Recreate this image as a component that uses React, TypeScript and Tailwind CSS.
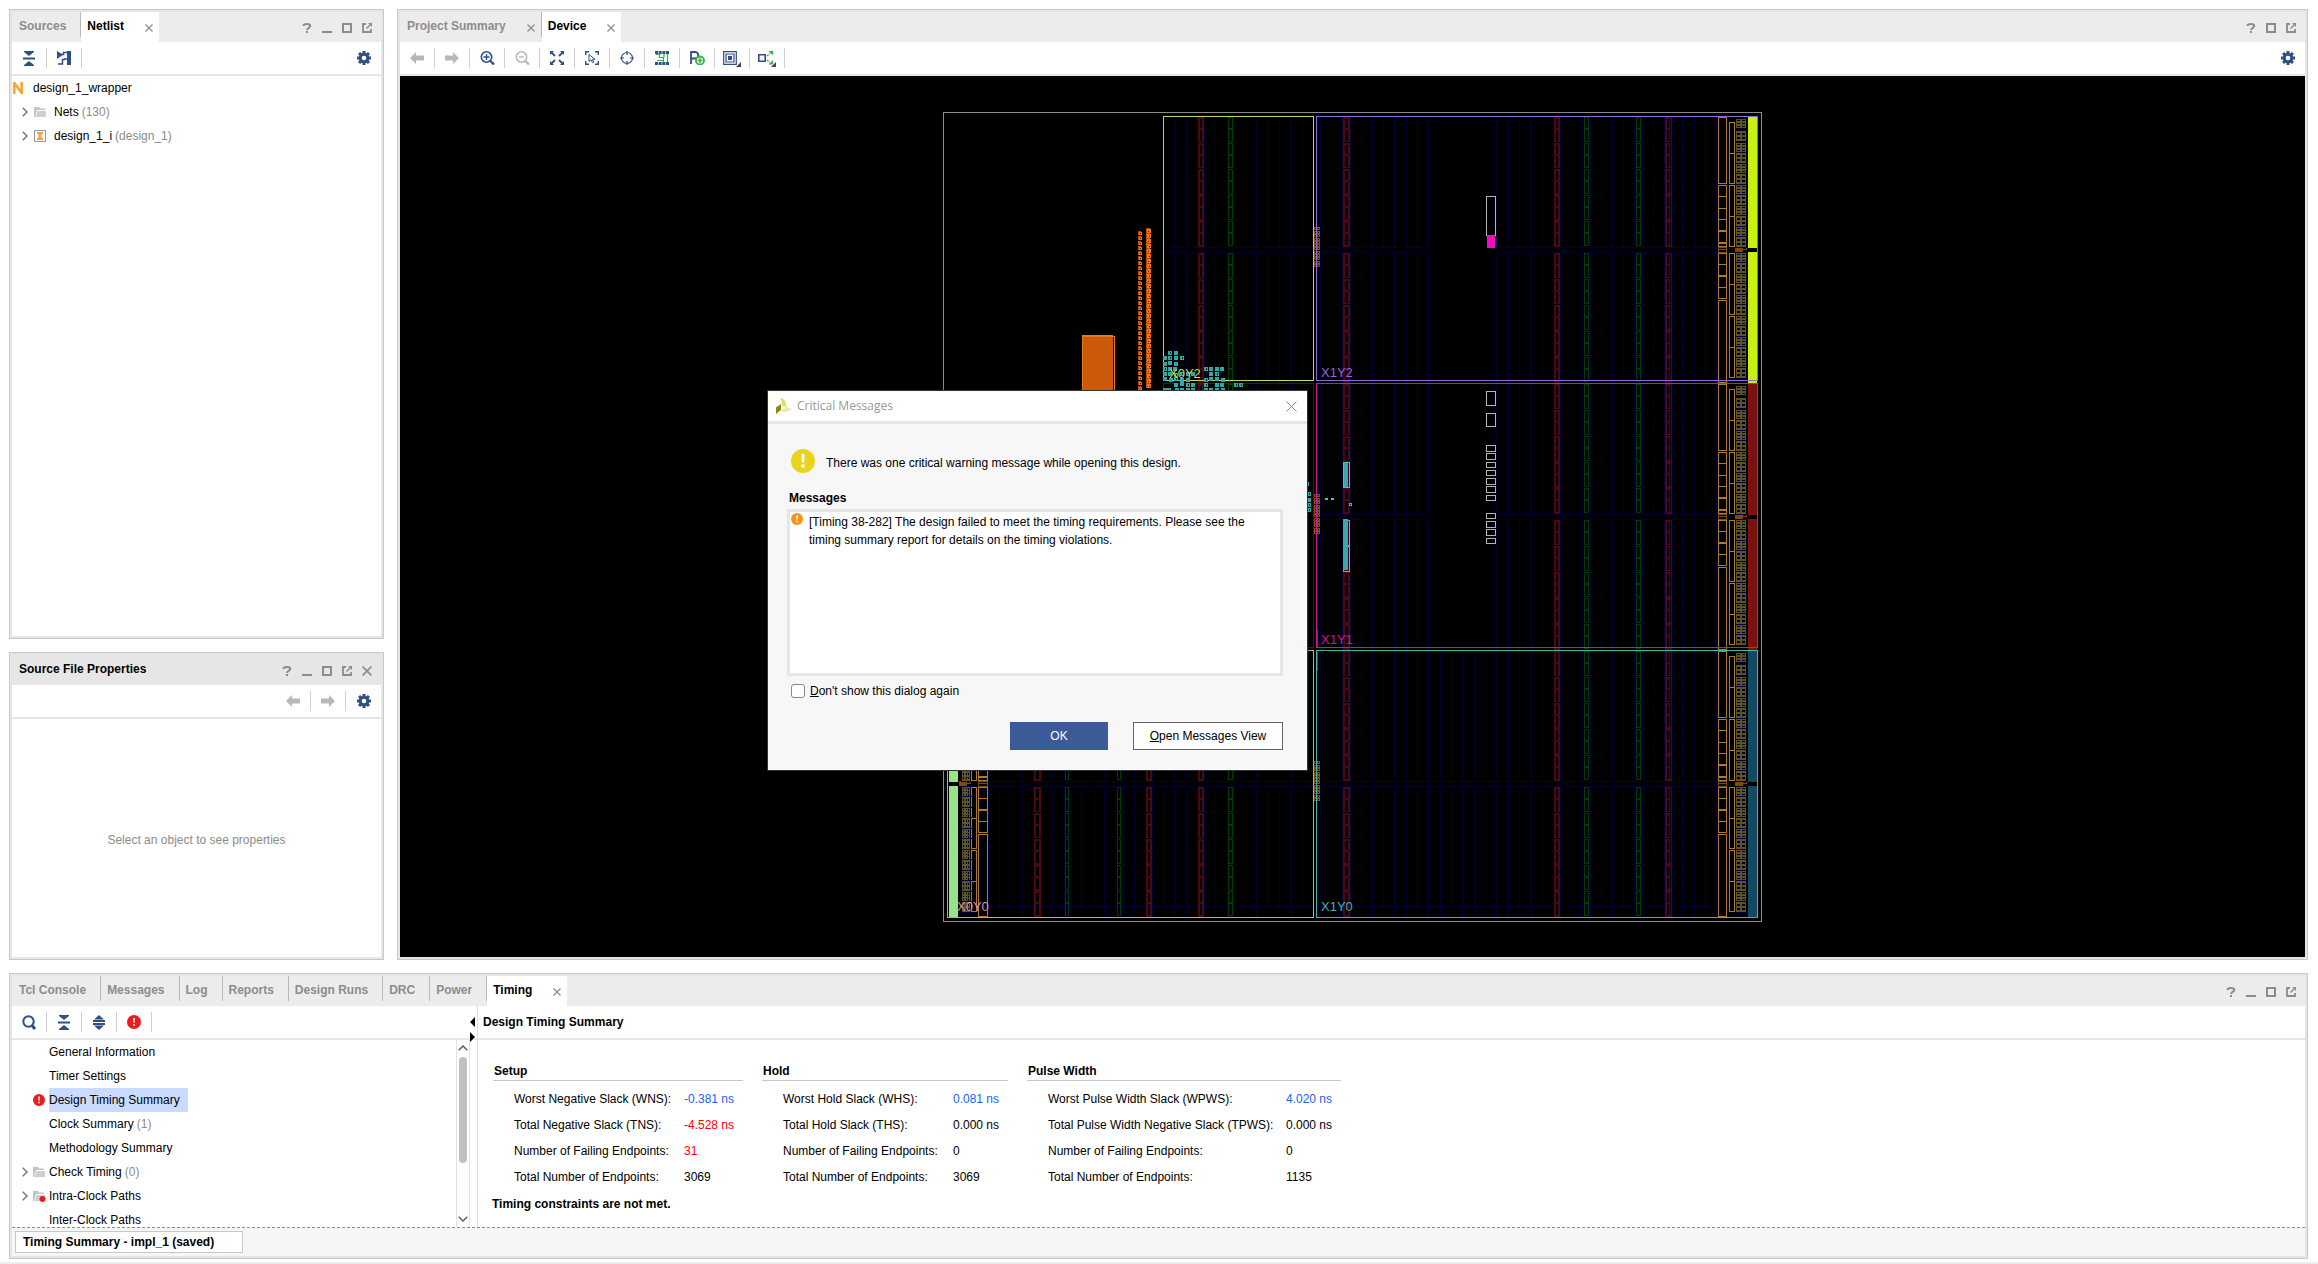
import React from 'react';
import clsx from 'clsx';

const NAVY = '#2f4f87';

/* ---------- small icons ---------- */

function Gear() {
  return (
    <svg width="14" height="14" viewBox="-7 -7 14 14">
      <circle r="3.8" fill="none" stroke={NAVY} strokeWidth="3" />
      {[0, 45, 90, 135, 180, 225, 270, 315].map((a) => (
        <rect key={a} x="-1.5" y="-7" width="3" height="3" fill={NAVY} transform={`rotate(${a})`} />
      ))}
    </svg>
  );
}

function Arrow({ right }: { right?: boolean }) {
  return (
    <svg width="14" height="12" viewBox="0 0 14 12">
      <path d={right ? 'M14 6 8 0v3.5H0v5h8V12z' : 'M0 6 6 0v3.5h8v5H6V12z'} fill="#b8b8b8" />
    </svg>
  );
}

function CollapseAll() {
  return (
    <svg width="12" height="15" viewBox="0 0 12 15" fill={NAVY}>
      <path d="M1 0h10v1L6 5 1 1zM0 6.5h12v2H0zM1 15h10v-1l-5-4-5 4z" />
    </svg>
  );
}

function ExpandAll() {
  return (
    <svg width="12" height="15" viewBox="0 0 12 15" fill={NAVY}>
      <path d="M1 4.5h10L6 0zM0 5h12v2H0zM0 8h12v2H0zM1 10.5h10L6 15z" />
    </svg>
  );
}

function SchematicIcon() {
  return (
    <svg width="14" height="14" viewBox="0 0 14 14">
      <path d="M0 0l6 3.800L0 8zM10 0h4v14h-4z" fill={NAVY} />
      <path d="M4 3.500h2.500V1.500H11M7 8h4M1 13h4.500V8.500H8" fill="none" stroke={NAVY} strokeWidth="1.500" />
    </svg>
  );
}

function SearchIcon() {
  return (
    <svg width="14" height="15" viewBox="0 0 14 15" fill="none" stroke={NAVY}>
      <circle cx="6.5" cy="6.5" r="5.2" strokeWidth="2" />
      <path d="M10 10.5 13 14" strokeWidth="3" />
    </svg>
  );
}

function ZoomIcon({ color, plus }: { color: string; plus?: boolean }) {
  return (
    <svg width="15" height="14" viewBox="0 0 15 14" fill="none" stroke={color}>
      <circle cx="6.5" cy="6" r="5.2" strokeWidth="1.6" />
      <path d={plus ? 'M3.5 6h6M6.5 3v6' : 'M4 6h5'} strokeWidth="1.4" />
      <path d="M10.5 10 14 13.5" strokeWidth="2.4" />
    </svg>
  );
}

function FitIcon() {
  return (
    <svg width="14" height="14" viewBox="0 0 14 14" fill={NAVY} stroke={NAVY}>
      <path d="M0 0h4L0 4zM14 0h-4l4 4zM0 14h4l-4-4zM14 14h-4l4-4z" stroke="none" />
      <path d="M1 1l4 4M13 1 9 5M1 13l4-4M13 13 9 9" strokeWidth="1.8" />
    </svg>
  );
}

function SelectAreaIcon() {
  return (
    <svg width="14" height="14" viewBox="0 0 14 14" fill="none" stroke={NAVY}>
      <path d="M.7 4V.7H4M10 .7h3.3V4M.7 10v3.3H4M10 13.3h3.3V10" strokeWidth="1.4" />
      <path d="M4 3.5v7l2-1.8 1.5 3 1.2-.6L7.3 8.3H10z" strokeWidth="1" />
    </svg>
  );
}

function TargetIcon() {
  return (
    <svg width="14" height="14" viewBox="0 0 14 14" fill="none" stroke={NAVY}>
      <circle cx="7" cy="7" r="5.5" strokeWidth="1.2" />
      <path d="M7 0v4M7 10v4M0 7h4M10 7h4" strokeWidth="1.2" />
    </svg>
  );
}

function RoutingIcon() {
  return (
    <svg width="14" height="14" viewBox="0 0 14 14">
      {[0, 3.7, 7.4, 11].map((x) => (
        <g key={x} fill={NAVY}>
          <rect x={x} y="0" width="3" height="3" />
          <rect x={x} y="11" width="3" height="3" />
        </g>
      ))}
      <path d="M1 3.5h3.5v3h4V11M12.5 3v8M2 9.5h6M9 3v3" fill="none" stroke="#3cab4a" strokeWidth="1.2" />
    </svg>
  );
}

function PinIcon() {
  return (
    <svg width="16" height="14" viewBox="0 0 16 14" fill="none">
      <path d="M2 13V1h4a3 3 0 0 1 0 6.5H2" stroke={NAVY} strokeWidth="1.8" />
      <circle cx="11" cy="9.5" r="4" fill="#fff" stroke="#3cb043" strokeWidth="1.8" />
      <path d="M8.5 9.5h5M11 7v5" stroke="#3cb043" strokeWidth="1.6" />
    </svg>
  );
}

function LayersIcon() {
  return (
    <svg width="18" height="18" viewBox="0 0 18 18">
      <path d="M.7 2.700h12.600v12.600H.7zM3 5h8v8H3z" fill="none" stroke={NAVY} strokeWidth="1.2" />
      <rect x="5" y="7" width="4" height="4" fill={NAVY} />
      <path d="M18 13v5h-5z" fill="#444" />
    </svg>
  );
}

function FanoutIcon() {
  return (
    <svg width="18" height="18" viewBox="0 0 18 18">
      <path d="M.8 5.800h6.400v6.400H.8z" fill="none" stroke={NAVY} strokeWidth="1.6" />
      <path d="M9 7l3-2.500M9 11l3 2.500" stroke="#3cb043" strokeWidth="1.4" strokeDasharray="2 1" />
      <path d="M10.500 2H15v4.500zM10.500 15.500H15V11z" fill="#3cb043" />
      <path d="M18 13v5h-5z" fill="#444" />
    </svg>
  );
}

function Alert({ color, size }: { color: string; size: number }) {
  return (
    <svg width={size} height={size} viewBox="0 0 24 24" className="shrink-0">
      <circle cx="12" cy="12" r="12" fill={color} />
      <path d="M10.400 5h3.200l-.4 8.500h-2.400zM10.500 15.500h3v3h-3z" fill="#fff" />
    </svg>
  );
}

function Folder({ dot }: { dot?: boolean }) {
  return (
    <svg width="13" height="12" viewBox="0 0 13 12" className="shrink-0">
      <path d="M0 1h5l1 1.500h5V4H3L1.500 9V11H0z" fill="#c4c4c4" />
      <path d="M3.500 5H12v6H1.500z" fill="#cfcfcf" />
      {dot && <circle cx="9.500" cy="9" r="3" fill="#e81c1c" />}
    </svg>
  );
}

function Chevron() {
  return (
    <svg width="6" height="10" viewBox="0 0 6 10" className="shrink-0">
      <path d="M.7.7 5 5 .7 9.300" fill="none" stroke="#777" strokeWidth="1.4" />
    </svg>
  );
}

function CloseX({ size = 8 }: { size?: number }) {
  return (
    <svg width={size} height={size} viewBox="0 0 8 8">
      <path d="M.5.5l7 7M7.500.5l-7 7" stroke="#8c8c8c" strokeWidth="1.3" />
    </svg>
  );
}

/* ---------- panel chrome ---------- */

function WindowButtons({ closable, noMinimize }: { closable?: boolean; noMinimize?: boolean }) {
  return (
    <div className="ml-auto mt-px flex items-center gap-[10px] pr-[9px]">
      <button aria-label="Help" className="h-[10px] w-[10px]">
        <svg width="10" height="10" viewBox="0 0 10 10" fill="none" stroke="#8c8c8c" strokeWidth="2">
          <path d="M1.500 3C1.500.5 8.500.3 8.300 3 8.200 5 5 4.600 5 7M5 8v2" />
        </svg>
      </button>
      {!noMinimize && <button aria-label="Minimize" className="h-[10px] w-[10px] border-b-2 border-[#8c8c8c]" />}
      <button aria-label="Maximize" className="h-[10px] w-[10px] border-2 border-[#8c8c8c]" />
      <button aria-label="Float" className="h-[10px] w-[10px]">
        <svg width="10" height="10" viewBox="0 0 10 10" fill="none" stroke="#8c8c8c">
          <path d="M4 1H1v8h8V6" strokeWidth="1.800" />
          <path d="M4.500 5.500 8 2" strokeWidth="1.400" />
          <path d="M6 0h4v4z" fill="#8c8c8c" stroke="none" />
        </svg>
      </button>
      {closable && (
        <button aria-label="Close" className="h-[10px] w-[10px]">
          <CloseX size={10} />
        </button>
      )}
    </div>
  );
}

function Panel({ className, children }: { className?: string; children: React.ReactNode }) {
  return (
    <section className={clsx('flex min-w-0 flex-col border border-[#c8c8c8] bg-[#e6e6e6] p-[2px]', className)}>
      {children}
    </section>
  );
}

const CLOSABLE = ['Netlist', 'Project Summary', 'Device', 'Timing'];

function TabBar({ tabs, active, noMinimize }: { tabs: string[]; active: string; noMinimize?: boolean }) {
  return (
    <div className="flex h-[30px] shrink-0 bg-[#ececec]">
      {tabs.map((t, i) => {
        const on = t === active;
        return (
          <div
            key={t}
            className={clsx(
              'flex',
              i === 0 ? 'pl-[7px]' : 'pl-[6px]',
              on ? 'h-[30px] bg-white' : 'h-[25px] border-r border-[#b8b8b8] text-[#8c8c8c]',
              CLOSABLE.includes(t) ? 'pr-[6px]' : 'pr-[14px]',
            )}
          >
            <button className="h-[27px] font-bold">{t}</button>
            {CLOSABLE.includes(t) && (
              <button aria-label={`Close ${t}`} className="ml-[21px] mt-px flex h-[30px] items-center">
                <CloseX />
              </button>
            )}
          </div>
        );
      })}
      <WindowButtons noMinimize={noMinimize} />
    </div>
  );
}

function Tool({ label, last, children }: { label: string; last?: boolean; children: React.ReactNode }) {
  return (
    <button
      aria-label={label}
      className={clsx('flex h-5 w-[35px] items-center justify-center', !last && 'border-r border-[#cfcfcf]')}
    >
      {children}
    </button>
  );
}

function Toolbar({ children }: { children: React.ReactNode }) {
  return <div className="mb-[2px] flex h-8 shrink-0 items-center bg-white">{children}</div>;
}

/* ---------- device floorplan ---------- */

const ROW = 267;
const COLS_LEFT = [1163, 1174, 1186, 1197, 1204, 1215, 1227, 1233, 1245, 1256, 1267, 1279, 1290, 1301];
const COLS_RIGHT = [
  1320, 1331, 1342, 1350, 1361, 1372, 1383, 1394, 1406, 1417, 1428, 1496, 1508, 1519, 1530, 1541, 1553, 1560, 1571,
  1582, 1590, 1601, 1612, 1623, 1634, 1642, 1653, 1664, 1672, 1682, 1694, 1705, 1716,
];
const COLS_MID = [1440, 1451, 1462, 1474, 1485];
const COLS_FAR = [988, 999, 1011, 1022, 1033, 1041, 1052, 1064, 1070, 1081, 1093, 1104, 1115, 1122, 1134, 1145, 1152];

type BoxProps = { x: number; y: number; w: number; h: number; c: string; fill?: string };

// one pixel outline that sits inside x..x+w, y..y+h
function Box({ x, y, w, h, c, fill = 'none' }: BoxProps) {
  return <rect x={x + 0.5} y={y + 0.5} width={w - 1} height={h - 1} stroke={c} fill={fill} />;
}

function RamColumn({ x, y, w, split }: { x: number; y: number; w: number; split?: boolean }) {
  const hole = w - 4 - (split ? 1 : 0);
  return (
    <>
      {[0, 26, 52, 78, 104, 136, 162, 188, 214, 240].map((d, i) => {
        const h = i % 5 === 4 || i > 6 || (i > 1 && i < 5) ? 26 : 25;
        return (
          <g key={d}>
            <rect x={x} y={y + d} width={w} height={h} fill="#4a0814" />
            <rect x={x + 2} y={y + d + 2} width={hole} height="9" fill="#000" />
            <rect x={x + 2} y={y + d + 13} width={hole} height="11" fill="#000" />
            {split && <rect x={x + 5} y={y + d + 1} width="1" height="23" fill="#000" />}
          </g>
        );
      })}
    </>
  );
}

function DspColumn({ x, y, w }: { x: number; y: number; w: number }) {
  return (
    <>
      {[0, 26, 52, 78, 104, 136, 162, 188, 214, 240].map((d) => (
        <g key={d}>
          <Box x={x} y={y + d} w={w} h={25} c="#003c00" />
          <rect x={x} y={y + d + 11} width={w} height="2" fill="#003c00" />
        </g>
      ))}
    </>
  );
}

const WIDE_IO = [
  [0, 67], [68, 12], [79, 13], [91, 12], [102, 12], [114, 12], [126, 4],
  [136, 12], [147, 12], [159, 12], [170, 12], [183, 83],
];
const NARROW_IO = [[5, 32], [36, 31], [68, 32], [99, 31], [136, 32], [167, 31], [199, 32], [230, 31]];
const IO_CELLS = [
  2, 14, 26, 36, 47, 57, 68, 78, 89, 99, 110, 120, 136, 146, 157, 167, 178, 188, 199, 209, 220, 230, 241, 251,
];

function IoColumns({ y, mirror }: { y: number; mirror?: boolean }) {
  const wide = mirror ? 978 : 1718;
  const narrow = mirror ? 971 : 1729;
  const cell = mirror ? 962 : 1736;
  return (
    <g>
      {WIDE_IO.map(([d, h]) => (
        <Box key={d} x={wide} y={y + d} w={mirror ? 10 : 9} h={h} c="#ac7c2c" />
      ))}
      {NARROW_IO.map(([d, h]) => (
        <Box key={d} x={narrow} y={y + d} w={6} h={h} c="#ac7c2c" />
      ))}
      <Box x={wide} y={y + 130} w={mirror ? 10 : 9} h={6} c="#7c480c" />
      <rect x={wide} y={y + 132} width="9" height="1" fill="#7c480c" />
      <rect x={mirror ? 959 : 1735} y={y + 130} width="8" height="5" fill="#80480c" />
      <Box x={mirror ? 966 : 1742} y={y + 130} w={5} h={3} c="#7c480c" />
      {IO_CELLS.map((d, i) => (
        <g key={d}>
          <rect x={cell} y={y + d} width={mirror ? 8 : 10} height={i % 2 ? 10 : 9} fill="#5a5230" />
          <rect x={cell - 1} y={y + d + (i % 2 ? 10 : 9)} width="12" height="1" fill="#00003a" />
          {(i % 2 ? [2, 6] : [1, 4, 7]).map((r) => (
            <g key={r} fill="#000">
              <rect x={cell + 1} y={y + d + r} width={mirror ? 1 : 3} height={i % 2 ? 2 : 1} />
              <rect x={cell + (mirror ? 4 : 6)} y={y + d + r} width={mirror ? 1 : 3} height={i % 2 ? 2 : 1} />
              {mirror && <rect x={cell + 6} y={y + d + r} width="1" height="2" />}
            </g>
          ))}
        </g>
      ))}
    </g>
  );
}

function ClockCells({ y }: { y: number }) {
  return (
    <>
      {[0, 4, 7, 11, 14, 17, 20, 24, 27, 30, 34, 37].map((d) => (
        <g key={d}>
          <rect x="1314" y={y + d} width="6" height="3" fill="#80500c" />
          <rect x="1315" y={y + d + 1} width="1" height="1" fill="#000" />
          <rect x="1318" y={y + d + 1} width="1" height="1" fill="#000" />
        </g>
      ))}
    </>
  );
}

const BANK_COLORS = ['#c8f010', '#7e1010', '#124a62'];

function Fabric({ y, row }: { y: number; row: number }) {
  let cols = COLS_LEFT.concat(COLS_RIGHT);
  if (row === 2) cols = COLS_FAR.concat(cols, COLS_MID);
  const bands = row === 2 ? [[948, 370], [1320, 397]] : [[1164, 149], [1321, 108], [1496, 222]];
  return (
    <g>
      {cols.map((x) => (
        <g key={x} fill="#000034">
          <rect x={x} y={y} width="1" height="130" />
          <rect x={x} y={y + 135} width="1" height="131" />
        </g>
      ))}
      {bands.map(([x, w]) => (
        <g key={x} fill="#000034">
          <rect x={x} y={y + 130} width={w} height="1" />
          <rect x={x} y={y + 135} width={w} height="1" />
          {row === 2 && <rect x={x} y={y + 255} width={w} height="1" />}
        </g>
      ))}
      <RamColumn x={1198} y={y} w={6} />
      <RamColumn x={1343} y={y} w={7} />
      <RamColumn x={1554} y={y} w={6} />
      <RamColumn x={1665} y={y} w={7} split />
      <DspColumn x={1228} y={y} w={5} />
      <DspColumn x={1584} y={y} w={5} />
      <DspColumn x={1636} y={y} w={5} />
      {row === 2 && (
        <>
          <RamColumn x={1034} y={y} w={7} />
          <RamColumn x={1146} y={y} w={6} />
          <DspColumn x={1065} y={y} w={4} />
          <DspColumn x={1117} y={y} w={4} />
          <IoColumns y={y} mirror />
          <rect x="949" y={y} width="9" height="131" fill="#98e288" />
          <rect x="949" y={y + 135} width="9" height="131" fill="#98e288" />
        </>
      )}
      <IoColumns y={y} />
      <rect x="1747" y={y} width="1" height="265" fill="#00003a" />
      <rect x="1748" y={y} width="9" height="131" fill={BANK_COLORS[row]} />
      <rect x="1748" y={y + 135} width="9" height="131" fill={BANK_COLORS[row]} />
    </g>
  );
}

const CONFIG_SITES = [
  [196, 40], [391, 15], [413, 14], [445, 7], [453, 7], [462, 6], [470, 6], [478, 7], [486, 7], [495, 6], [513, 6],
  [521, 7], [529, 7], [538, 6],
];

// placed slices: x, y, hollow
const PLACED = [
  [1168, 351, 1], [1174, 351, 0], [1163, 356, 0], [1168, 356, 1], [1174, 356, 0], [1180, 356, 1], [1163, 362, 0],
  [1168, 361, 0], [1174, 362, 0], [1163, 367, 1], [1168, 367, 0], [1173, 367, 0], [1204, 367, 1], [1209, 367, 0],
  [1215, 367, 0], [1220, 367, 0], [1163, 372, 0], [1168, 372, 0], [1174, 373, 1], [1180, 372, 1], [1186, 372, 1],
  [1191, 372, 0], [1209, 372, 0], [1215, 372, 1], [1163, 377, 0], [1169, 378, 0], [1174, 377, 1], [1180, 378, 0],
  [1186, 378, 0], [1204, 378, 1], [1209, 377, 0], [1215, 377, 0], [1221, 378, 0], [1174, 383, 0], [1180, 382, 0],
  [1186, 383, 1], [1191, 383, 0], [1204, 383, 1], [1215, 383, 0], [1220, 383, 0], [1234, 383, 1], [1239, 383, 1],
  [1163, 388, 0], [1167, 388, 0], [1175, 388, 0], [1180, 388, 0], [1186, 388, 0], [1191, 388, 0], [1204, 388, 0],
  [1209, 388, 0], [1215, 388, 0], [1221, 388, 0], [1305, 482, 0], [1307, 492, 1], [1307, 498, 0], [1307, 503, 1],
  [1307, 508, 1],
];

function Device() {
  const stripes = Array.from({ length: 32 }, (_, i) => i);
  return (
    <svg width="819" height="810" viewBox="943 112 819 810" shapeRendering="crispEdges" fill="none">
      {[0, 1, 2].map((row) => (
        <Fabric key={row} row={row} y={117 + row * ROW} />
      ))}
      <Box x={943} y={112} w={819} h={810} c="#8a8a8a" />

      {/* processor pads */}
      <rect x="1082" y="335" width="31" height="60" fill="#cc5a08" />
      <path d="M1082 335.500h31M1082 336.500h33M1082.500 335v60M1114.500 336v60" stroke="#e87818" />
      {stripes.map((i) => (
        <g key={i}>
          <rect x="1138" y={231 + i * 5} width="3" height="4" fill="#b84c06" />
          <rect x="1139" y={232 + i * 5} width="3" height="3" fill="#f07010" />
          <rect x="1140" y={233 + i * 5} width="1" height="1" fill="#401800" />
          <rect x="1146" y={228 + i * 5} width="4" height="5" fill="#b84c06" />
          <rect x="1147" y={229 + i * 5} width="4" height="4" fill="#f87010" />
          <rect x={1148 + (i % 2)} y={231 + i * 5} width="1" height="1" fill="#401800" />
        </g>
      ))}

      {CONFIG_SITES.map(([y, h]) => (
        <Box key={y} x={1486} y={y} w={10} h={h} c="#b4b4b4" />
      ))}
      <rect x="1487" y="235" width="8" height="13" fill="#f40cc4" />
      <path d="M1485.500 384v161M1485 435.500h11" stroke="#00002c" />

      {[494, 761, 227].map((y) => (
        <ClockCells key={y} y={y} />
      ))}

      {/* clock regions */}
      <Box x={1163} y={383} w={151} h={265} c="#1414b4" />
      <Box x={1163} y={116} w={151} h={265} c="#c0d850" />
      <Box x={1316} y={116} w={442} h={265} c="#9068d8" />
      <Box x={1316} y={383} w={442} h={265} c="#c81898" />
      <Box x={947} y={650} w={367} h={268} c="#d89898" />
      <Box x={1316} y={650} w={442} h={268} c="#40b8a0" />
      <path d="M1317.500 629v18M1317.500 652v19" stroke="#704010" />

      {PLACED.map(([x, y, hollow]) => (
        <g key={`${x}-${y}`}>
          <rect x={x} y={y} width="4" height="4" fill="#30a8a8" />
          {hollow === 1 && <rect x={x + 2} y={y + 1} width="1" height="2" fill="#002828" />}
        </g>
      ))}
      <rect x="1325" y="498" width="3" height="2" fill="#38c8c8" />
      <rect x="1331" y="498" width="3" height="2" fill="#38c8c8" />
      <Box x={1349} y={503} w={3} h={3} c="#38b8b8" />
      {[462, 520, 546].map((y) => (
        <Box key={y} x={1343} y={y} w={7} h={26} c="#38c8c8" />
      ))}
      <rect x="1344" y="463" width="4" height="24" fill="#38a8a8" />
      <rect x="1343" y="519" width="5" height="51" fill="#38a8a8" />

      <g fontFamily='"Liberation Sans", sans-serif' fontSize="13">
        <text x="1169" y="378" fill="#c0d850">X0Y2</text>
        <text x="1321" y="377" fill="#9068d8">X1Y2</text>
        <text x="1321" y="644" fill="#c81898">X1Y1</text>
        <text x="957" y="911" fill="#d89898">X0Y0</text>
        <text x="1321" y="911" fill="#40b8a0">X1Y0</text>
      </g>
    </svg>
  );
}

/* ---------- timing panel ---------- */

const TREE = [
  { label: 'General Information' },
  { label: 'Timer Settings' },
  { label: 'Design Timing Summary', alert: true },
  { label: 'Clock Summary', count: 1 },
  { label: 'Methodology Summary' },
  { label: 'Check Timing', count: 0, folder: true },
  { label: 'Intra-Clock Paths', folder: true, dot: true },
  { label: 'Inter-Clock Paths' },
];

const GROUPS = [
  {
    title: 'Setup',
    width: 'w-[250px]',
    labelWidth: 'w-[191px]',
    rows: [
      ['Worst Negative Slack (WNS):', '-0.381 ns', 'text-[#1d5ff0]'],
      ['Total Negative Slack (TNS):', '-4.528 ns', 'text-[#ff0000]'],
      ['Number of Failing Endpoints:', '31', 'text-[#ff0000]'],
      ['Total Number of Endpoints:', '3069', ''],
    ],
  },
  {
    title: 'Hold',
    width: 'w-[246px]',
    labelWidth: 'w-[191px]',
    rows: [
      ['Worst Hold Slack (WHS):', '0.081 ns', 'text-[#1d5ff0]'],
      ['Total Hold Slack (THS):', '0.000 ns', ''],
      ['Number of Failing Endpoints:', '0', ''],
      ['Total Number of Endpoints:', '3069', ''],
    ],
  },
  {
    title: 'Pulse Width',
    width: 'w-[314px]',
    labelWidth: 'w-[259px]',
    rows: [
      ['Worst Pulse Width Slack (WPWS):', '4.020 ns', 'text-[#1d5ff0]'],
      ['Total Pulse Width Negative Slack (TPWS):', '0.000 ns', ''],
      ['Number of Failing Endpoints:', '0', ''],
      ['Total Number of Endpoints:', '1135', ''],
    ],
  },
];

function TimingPanel() {
  return (
    <Panel className="h-[286px] shrink-0">
      <TabBar
        tabs={['Tcl Console', 'Messages', 'Log', 'Reports', 'Design Runs', 'DRC', 'Power', 'Timing']}
        active="Timing"
      />
      <div className="flex min-h-0 flex-1 bg-white">
        <div className="relative flex w-[466px] shrink-0 flex-col border-r border-[#dcdcdc]">
          <div className="flex h-[34px] shrink-0 items-center border-b-2 border-[#e6e6e6]">
            <Tool label="Search"><SearchIcon /></Tool>
            <Tool label="Collapse all"><CollapseAll /></Tool>
            <Tool label="Expand all"><ExpandAll /></Tool>
            <Tool label="Show failures"><Alert color="#ec1c1c" size={14} /></Tool>
          </div>
          <div className="flex min-h-0 flex-1">
            <ul className="flex-1 overflow-hidden">
              {TREE.map((n) => (
                <li key={n.label} className="flex h-6 items-center pl-[10px]">
                  <span className="w-[11px]">{n.folder && <Chevron />}</span>
                  <span className="w-4">
                    {n.alert && <Alert color="#ec1c1c" size={12} />}
                    {n.folder && <Folder dot={n.dot} />}
                  </span>
                  <span className={clsx('flex h-6 items-center gap-[3px] pr-2', n.alert && 'bg-[#c9dcff]')}>
                    {n.label}
                    {n.count !== undefined && <span className="text-[#8c8c8c]">({n.count})</span>}
                  </span>
                </li>
              ))}
            </ul>
            <div className="mr-[7px] flex w-[14px] flex-col items-center border-x border-[#e2e2e2] py-[5px]">
              <svg width="10" height="6" viewBox="0 0 10 6">
                <path d="M.7 5.300 5 1l4.300 4.300" fill="none" stroke="#666" strokeWidth="1.600" />
              </svg>
              <div className="mt-[6px] h-[106px] w-2 rounded-full bg-[#c1c1c1]" />
              <svg width="10" height="6" viewBox="0 0 10 6" className="mt-auto">
                <path d="M.7.7 5 5 9.300.7" fill="none" stroke="#666" strokeWidth="1.600" />
              </svg>
            </div>
          </div>
          <svg width="5" height="25" viewBox="0 0 5 25" className="absolute right-[2px] top-[11px]">
            <path d="M5 0v10L0 5zM0 15v10l5-5z" fill="#000" />
          </svg>
        </div>
        <div className="flex-1">
          <h2 className="flex h-[34px] items-center border-b-2 border-[#e6e6e6] pb-px pl-[5px] font-bold">
            Design Timing Summary
          </h2>
          <div className="mt-[21px] flex gap-[19px] pl-[15px]">
            {GROUPS.map((g) => (
              <div key={g.title} className={g.width}>
                <h3 className="mb-[5px] h-5 border-b border-[#c8c8c8] pl-px leading-5 font-bold">{g.title}</h3>
                <table className="w-full">
                  <tbody>
                    {g.rows.map(([label, value, color]) => (
                      <tr key={label} className="h-[26px]">
                        <td className={clsx('pl-[21px]', g.labelWidth)}>{label}</td>
                        <td className={color}>{value}</td>
                      </tr>
                    ))}
                  </tbody>
                </table>
              </div>
            ))}
          </div>
          <p className="pl-[14px] pt-px leading-[26px] font-bold">Timing constraints are not met.</p>
        </div>
      </div>
      <div className="flex h-[29px] shrink-0 items-center border-t border-dashed border-[#909090] bg-[#f6f6f6] pl-[3px]">
        <button className="h-[22px] w-[228px] border border-[#c8c8c8] bg-white pl-[7px] text-left font-bold">
          Timing Summary - impl_1 (saved)
        </button>
      </div>
    </Panel>
  );
}

/* ---------- dialog ---------- */

function CriticalMessages() {
  return (
    <div
      role="dialog"
      aria-label="Critical Messages"
      className="absolute left-[767px] top-[390px] flex h-[381px] w-[541px] flex-col border border-[#333] bg-[#f7f7f7]"
    >
      <div className="flex h-[33px] items-center border-b-[3px] border-[#e6e6e6] bg-white pl-2 pr-[10px]">
        <svg width="16" height="16" viewBox="0 0 16 16">
          <path d="M4 0c4 0 6 3 6.500 9L6 7.500C6 5 5.500 2 4 0z" fill="#d8e060" />
          <path d="M0 9.500 5 6v6L0 16z" fill="#8a8c10" />
          <path d="M6 12l4-3 6 1.500C14 13 10 14.500 6 14z" fill="#e8eca8" />
        </svg>
        <span className='pl-[5px] font-["Open_Sans",sans-serif] text-[#999]'>Critical Messages</span>
        <button aria-label="Close dialog" className="ml-auto">
          <svg width="11" height="11" viewBox="0 0 11 11">
            <path d="M.5.5l10 10M10.500.5l-10 10" stroke="#888" />
          </svg>
        </button>
      </div>
      <div className="flex flex-1 flex-col pl-[19px] pr-[24px] pt-[25px]">
        <div className="flex h-6 items-center pl-1">
          <Alert color="#e8d41c" size={24} />
          <span className="pl-[11px] pt-1">There was one critical warning message while opening this design.</span>
        </div>
        <h2 className="mt-4 pl-[2px] leading-[18px] font-bold">Messages</h2>
        <div className="mt-[2px] flex h-[167px] gap-[6px] border-[3px] border-[#e6e6e6] bg-white pl-px">
          <div className="pt-px"><Alert color="#f7941d" size={12} /></div>
          <p className="pt-px leading-[18px]">
            [Timing 38-282] The design failed to meet the timing requirements. Please see the
            <br />
            timing summary report for details on the timing violations.
          </p>
        </div>
        <label className="mt-[6px] flex h-[18px] items-center gap-[5px] pl-1">
          <input
            type="checkbox"
            className="h-[14px] w-[14px] appearance-none rounded-[3px] border border-[#888] bg-white"
          />
          <span><u>D</u>on't show this dialog again</span>
        </label>
        <div className="mt-[22px] flex justify-end gap-[25px]">
          <button className="h-7 w-[98px] bg-[#3b5b98] text-white">OK</button>
          <button className="h-7 w-[150px] border border-[#666] bg-white"><u>O</u>pen Messages View</button>
        </div>
      </div>
    </div>
  );
}

export default function App() {
  return (
    <div className='relative flex h-screen flex-col bg-white font-["Liberation_Sans",Arial,sans-serif] text-xs text-black'>
      <main className="flex min-h-0 flex-1 flex-col gap-[13px] pb-[3px] pl-[9px] pr-[10px] pt-[9px]">
        <div className="flex min-h-0 flex-1 gap-[13px]">
          <div className="flex w-[375px] shrink-0 flex-col gap-[13px]">
            <Panel className="flex-1">
              <TabBar tabs={['Sources', 'Netlist']} active="Netlist" />
              <Toolbar>
                <Tool label="Collapse all"><CollapseAll /></Tool>
                <Tool label="Schematic"><SchematicIcon /></Tool>
                <div className="ml-auto"><Tool label="Settings" last><Gear /></Tool></div>
              </Toolbar>
              <ul className="flex-1 bg-white">
                <li className="flex h-6 items-center gap-[10px] pl-px">
                  <svg width="10" height="12" viewBox="0 0 10 12">
                    <path d="M1.300 12V0M8.700 12V0M1.300 1l7.400 10" stroke="#f8a830" strokeWidth="2.600" />
                  </svg>
                  design_1_wrapper
                </li>
                <li className="flex h-6 items-center pl-[10px]">
                  <Chevron />
                  <span className="pl-[6px] pr-[7px]"><Folder /></span>
                  Nets <span className="pl-[3px] text-[#8c8c8c]">(130)</span>
                </li>
                <li className="flex h-6 items-center pl-[10px]">
                  <Chevron />
                  <span className="pl-[6px] pr-2">
                    <svg width="12" height="12" viewBox="0 0 12 12">
                      <rect x=".5" y=".5" width="11" height="11" fill="#fff" stroke="#999" />
                      <path d="M3 2h6v2H7.500v4H9v2H3V8h1.500V4H3z" fill="#f8a040" />
                    </svg>
                  </span>
                  design_1_i <span className="pl-[3px] text-[#8c8c8c]">(design_1)</span>
                </li>
              </ul>
            </Panel>
            <Panel className="h-[308px] shrink-0">
              <div className="flex h-[30px] shrink-0">
                <h2 className="pl-[7px] leading-[29px] font-bold">Source File Properties</h2>
                <WindowButtons closable />
              </div>
              <Toolbar>
                <div className="ml-auto flex">
                  <Tool label="Back"><Arrow /></Tool>
                  <Tool label="Forward"><Arrow right /></Tool>
                  <Tool label="Settings" last><Gear /></Tool>
                </div>
              </Toolbar>
              <div className="flex flex-1 items-center justify-center bg-white pt-[3px] text-[#8c8c8c]">
                Select an object to see properties
              </div>
            </Panel>
          </div>
          <Panel className="flex-1">
            <TabBar tabs={['Project Summary', 'Device']} active="Device" noMinimize />
            <Toolbar>
              <Tool label="Back"><Arrow /></Tool>
              <Tool label="Forward"><Arrow right /></Tool>
              <Tool label="Zoom in"><ZoomIcon color={NAVY} plus /></Tool>
              <Tool label="Zoom out"><ZoomIcon color="#b8b8b8" /></Tool>
              <Tool label="Zoom fit"><FitIcon /></Tool>
              <Tool label="Select area"><SelectAreaIcon /></Tool>
              <Tool label="Autofit selection"><TargetIcon /></Tool>
              <Tool label="Routing resources"><RoutingIcon /></Tool>
              <Tool label="Place ports"><PinIcon /></Tool>
              <Tool label="Draw pblock"><LayersIcon /></Tool>
              <Tool label="Cell drivers"><FanoutIcon /></Tool>
              <div className="ml-auto"><Tool label="Settings" last><Gear /></Tool></div>
            </Toolbar>
            <div className="flex min-h-0 flex-1 items-center justify-center overflow-hidden bg-black">
              <Device />
            </div>
          </Panel>
        </div>
        <TimingPanel />
      </main>
      <div className="h-[2px] shrink-0 bg-[#ececec]" />
      <CriticalMessages />
    </div>
  );
}
